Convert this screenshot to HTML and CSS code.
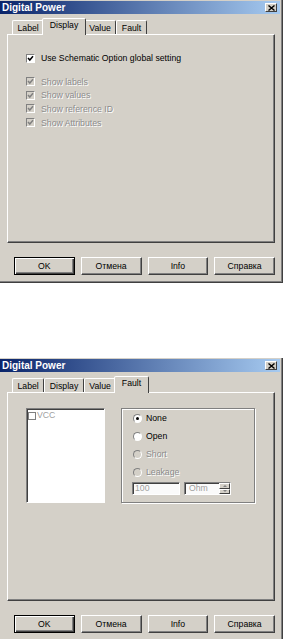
FILE: index.html
```html
<!DOCTYPE html>
<html lang="en">
  <head>
    <meta charset="UTF-8" />
    <title>Digital Power</title>
    <link rel="stylesheet" href="styles.css">
  </head>

  <body>
    <!-- Display tab -->
    <div class="window">
      <div class="titlebar">
        <span class="title">Digital Power</span>
        <span class="close">
          <svg width="7" height="6" viewBox="0 0 7 6"><path d="M0.5 0.5 L6.5 5.5 M6.5 0.5 L0.5 5.5" stroke="#000" stroke-width="1.4"/></svg>
        </span>
      </div>
      <div class="tabs">
        <span class="tab">Label</span>
        <span class="tab active">Display</span>
        <span class="tab">Value</span>
        <span class="tab">Fault</span>
      </div>
      <div class="panel display-page">
        <div class="check-row">
          <span class="checkbox">
            <svg width="7" height="7" viewBox="0 0 7 7"><path d="M1 3 L2.8 5 L6 1.2" stroke="#000" stroke-width="1.5" fill="none"/></svg>
          </span>
          <span>Use Schematic Option global setting</span>
        </div>
        <div class="check-list">
          <div class="check-row">
            <span class="checkbox disabled">
              <svg width="7" height="7" viewBox="0 0 7 7"><path d="M1 3 L2.8 5 L6 1.2" stroke="#808080" stroke-width="1.5" fill="none"/></svg>
            </span>
            <span class="muted">Show labels</span>
          </div>
          <div class="check-row">
            <span class="checkbox disabled">
              <svg width="7" height="7" viewBox="0 0 7 7"><path d="M1 3 L2.8 5 L6 1.2" stroke="#808080" stroke-width="1.5" fill="none"/></svg>
            </span>
            <span class="muted">Show values</span>
          </div>
          <div class="check-row">
            <span class="checkbox disabled">
              <svg width="7" height="7" viewBox="0 0 7 7"><path d="M1 3 L2.8 5 L6 1.2" stroke="#808080" stroke-width="1.5" fill="none"/></svg>
            </span>
            <span class="muted">Show reference ID</span>
          </div>
          <div class="check-row">
            <span class="checkbox disabled">
              <svg width="7" height="7" viewBox="0 0 7 7"><path d="M1 3 L2.8 5 L6 1.2" stroke="#808080" stroke-width="1.5" fill="none"/></svg>
            </span>
            <span class="muted">Show Attributes</span>
          </div>
        </div>
      </div>
      <div class="buttons">
        <button class="btn default">OK</button>
        <button class="btn">Отмена</button>
        <button class="btn">Info</button>
        <button class="btn">Справка</button>
      </div>
    </div>

    <!-- Fault tab -->
    <div class="window">
      <div class="titlebar">
        <span class="title">Digital Power</span>
        <span class="close">
          <svg width="7" height="6" viewBox="0 0 7 6"><path d="M0.5 0.5 L6.5 5.5 M6.5 0.5 L0.5 5.5" stroke="#000" stroke-width="1.4"/></svg>
        </span>
      </div>
      <div class="tabs">
        <span class="tab">Label</span>
        <span class="tab">Display</span>
        <span class="tab">Value</span>
        <span class="tab active">Fault</span>
      </div>
      <div class="panel fault-page">
        <div class="listbox">
          <div class="list-item">
            <span class="item-box"></span>
            <span>VCC</span>
          </div>
        </div>
        <div class="group">
          <div class="radio-row">
            <span class="radio checked"></span>
            <span>None</span>
          </div>
          <div class="radio-row">
            <span class="radio"></span>
            <span>Open</span>
          </div>
          <div class="radio-row">
            <span class="radio disabled"></span>
            <span class="muted">Short</span>
          </div>
          <div class="radio-row">
            <span class="radio disabled"></span>
            <span class="muted">Leakage</span>
          </div>
          <div class="field-row">
            <span class="field">100</span>
            <span class="field combo">
              <span>Ohm</span>
              <span class="spin">
                <span><i class="arrow-up"></i></span>
                <span><i class="arrow-down"></i></span>
              </span>
            </span>
          </div>
        </div>
      </div>
      <div class="buttons">
        <button class="btn default">OK</button>
        <button class="btn">Отмена</button>
        <button class="btn">Info</button>
        <button class="btn">Справка</button>
      </div>
    </div>
  </body>
</html>
```

FILE: styles.css
```css
body {
  margin: 0;
  background-color: #fff;
  font-family: "Liberation Sans", Arial, sans-serif;
  font-size: 8.7px;
  color: #000;
}

.window {
  width: 283px;
  height: 283px;
  box-sizing: border-box;
  padding-top: 1px;
  background-color: #d4d0c8;
  border-right: 1px solid #404040;
  border-bottom: 1px solid #404040;
  box-shadow: inset -1px -1px #808080;
  display: flex;
  flex-direction: column;
}

.window + .window {
  margin-top: 75px;
}

/* title bar */
.titlebar {
  height: 13px;
  margin-right: 2px;
  padding: 0 3px 0 2px;
  background: linear-gradient(to right, #0a246a, #a6caf0);
  display: flex;
  align-items: center;
  justify-content: space-between;
}

.title {
  color: #fff;
  font-weight: bold;
  font-size: 10px;
}

.close {
  width: 12px;
  height: 9px;
  box-sizing: border-box;
  background-color: #d4d0c8;
  border: 1px solid;
  border-color: #fff #404040 #404040 #fff;
  display: flex;
  align-items: center;
  justify-content: center;
}

.close svg {
  display: block;
}

/* tabs */
.tabs {
  height: 16px;
  margin-top: 4px;
  padding-left: 12px;
  display: flex;
  align-items: flex-end;
}

.tab {
  height: 14px;
  box-sizing: border-box;
  padding: 1px 4.5px 0;
  line-height: 13px;
  border: 1px solid;
  border-bottom: none;
  border-color: #fff #404040 transparent #fff;
  border-radius: 2px 2px 0 0;
}

.tab.active {
  position: relative;
  height: 17px;
  margin: 0 -2px -1px;
  padding: 0 6.5px;
  background-color: #d4d0c8;
}

/* tab page */
.panel {
  margin-left: 7px;
  width: 268px;
  height: 209px;
  box-sizing: border-box;
  border: 1px solid;
  border-color: #fff #404040 #404040 #fff;
  box-shadow: inset -1px -1px #808080;
}

.display-page {
  padding: 18px 0 0 18px;
}

.check-row {
  display: flex;
  align-items: center;
  gap: 6px;
}

.check-list {
  margin-top: 12px;
}

.check-list .check-row {
  height: 13.6px;
}

.checkbox {
  width: 9px;
  height: 9px;
  box-sizing: border-box;
  background-color: #fff;
  border: 1px solid;
  border-color: #808080 #fff #fff #808080;
  display: flex;
  align-items: center;
  justify-content: center;
}

.checkbox svg {
  display: block;
}

.checkbox.disabled {
  background-color: #d4d0c8;
}

.muted {
  color: #8c8c8c;
  text-shadow: 1px 1px 0 #fff;
}

/* fault page */
.fault-page {
  padding: 15px 0 0 18px;
  display: flex;
  align-items: flex-start;
  gap: 16px;
}

.listbox {
  width: 79px;
  height: 95px;
  box-sizing: border-box;
  padding: 2px 1px;
  background-color: #fff;
  border: 1px solid;
  border-color: #808080 #fff #fff #808080;
  box-shadow: inset 1px 1px #404040;
}

.list-item {
  display: flex;
  align-items: center;
  gap: 1px;
  color: #a0a0a0;
  line-height: 9px;
}

.item-box {
  width: 8px;
  height: 8px;
  box-sizing: border-box;
  border: 1px solid #808080;
}

.group {
  width: 134px;
  height: 95px;
  box-sizing: border-box;
  padding-left: 10px;
  border: 1px solid #808080;
  box-shadow: inset 1px 1px #fff, 1px 1px #fff;
}

.radio-row {
  height: 18px;
  padding-left: 1px;
  display: flex;
  align-items: center;
  gap: 4px;
}

.radio {
  width: 9px;
  height: 9px;
  box-sizing: border-box;
  border-radius: 50%;
  background-color: #fff;
  border: 1px solid;
  border-color: #808080 #fff #fff #808080;
  display: flex;
  align-items: center;
  justify-content: center;
}

.radio.checked::after {
  content: "";
  width: 3px;
  height: 3px;
  border-radius: 50%;
  background-color: #000;
}

.radio.disabled {
  background-color: #d4d0c8;
}

.field-row {
  margin-top: 1px;
  display: flex;
  gap: 4px;
}

.field {
  width: 48px;
  height: 13px;
  box-sizing: border-box;
  padding-left: 2px;
  line-height: 11px;
  color: #a0a0a0;
  background-color: #fafafa;
  border: 1px solid;
  border-color: #808080 #fff #fff #808080;
  box-shadow: inset 1px 1px #404040;
}

.combo {
  width: 47px;
  padding-left: 4px;
  display: flex;
  justify-content: space-between;
}

.spin {
  width: 11px;
  display: flex;
  flex-direction: column;
}

.spin span {
  flex: 1;
  background-color: #d4d0c8;
  border: 1px solid;
  border-color: #fff #404040 #404040 #fff;
  display: flex;
  align-items: center;
  justify-content: center;
}

.arrow-up,
.arrow-down {
  width: 0;
  height: 0;
  border-left: 2px solid transparent;
  border-right: 2px solid transparent;
}

.arrow-up {
  border-bottom: 2px solid #808080;
}

.arrow-down {
  border-top: 2px solid #808080;
}

/* buttons */
.buttons {
  width: 261px;
  margin-top: 14px;
  padding-left: 14px;
  display: grid;
  grid-template-columns: repeat(4, 1fr);
  gap: 6px;
}

.btn {
  height: 18px;
  padding: 0;
  font: inherit;
  color: #000;
  background-color: #d4d0c8;
  border: 1px solid;
  border-color: #fff #404040 #404040 #fff;
  box-shadow: inset -1px -1px #808080;
}

.btn.default {
  border-color: #000;
  box-shadow: inset 1px 1px #fff, inset -1px -1px #404040, inset -2px -2px #808080;
}
```
